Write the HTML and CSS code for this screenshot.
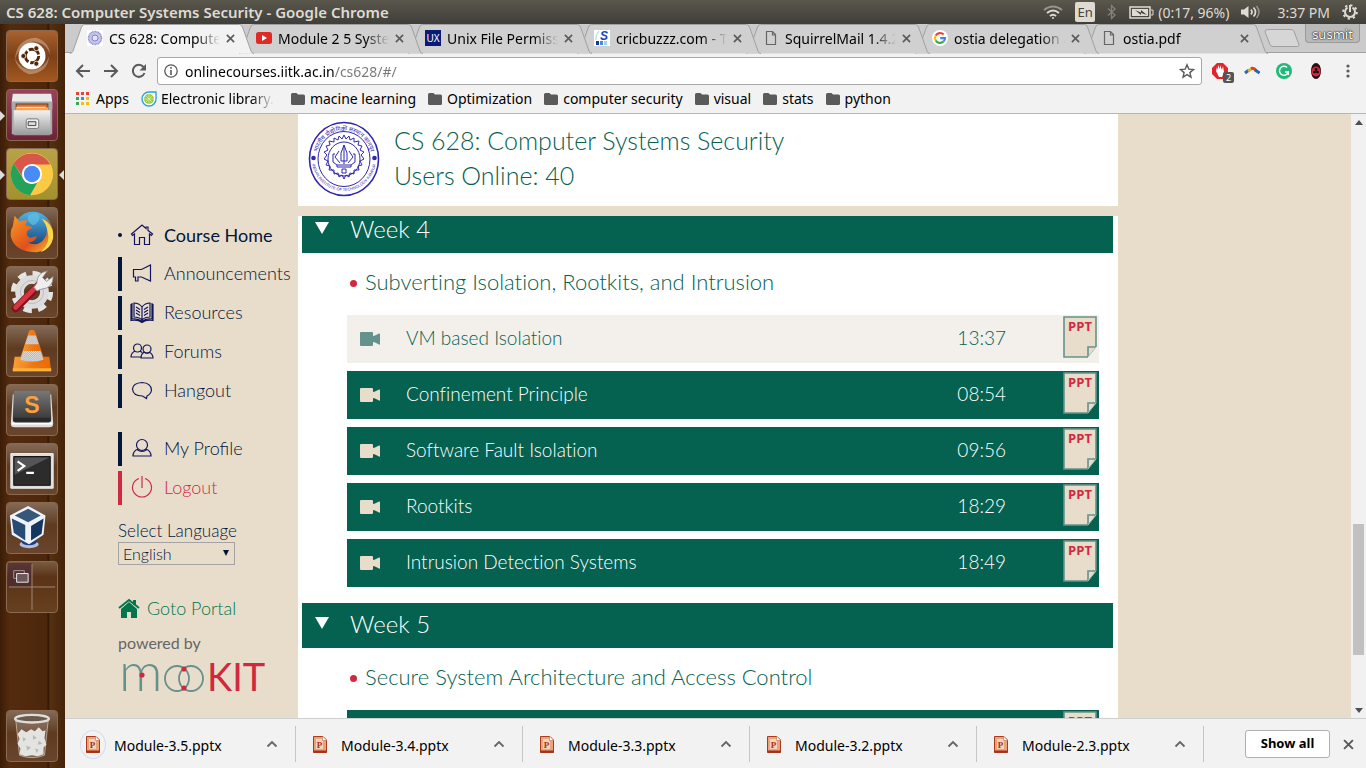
FILE: index.html
```html
<!DOCTYPE html>
<html lang="en">
<head>
<meta charset="utf-8">
<title>CS 628: Computer Systems Security</title>
<link rel="stylesheet" href="styles.css">
</head>
<body>
<svg class="defs" aria-hidden="true">
  <defs>
    <symbol id="tab" viewBox="0 0 184 30"><path d="M0 29.500C2 29 2.500 28 3 27L11.500 3Q12.500 .5 14.500 .5H169.500Q171.500 .5 172.500 3L181 27Q182 29.500 184 29.500"/></symbol>
    <symbol id="close" viewBox="0 0 10 10"><path d="M1 1l8 8M9 1l-8 8" fill="none" stroke="currentColor" stroke-width="1.800"/></symbol>
    <symbol id="folder" viewBox="0 0 14 12"><path d="M1.500 0h4L7 1.500h5.500A1.500 1.500 0 0 1 14 3v7.500a1.500 1.500 0 0 1-1.500 1.500h-11A1.500 1.500 0 0 1 0 10.500v-9A1.500 1.500 0 0 1 1.500 0z" fill="#5a5a5a"/></symbol>
    <symbol id="page" viewBox="0 0 16 16"><path d="M3.500 1.500h6l3 3v10h-9zM9.500 1.500v3.500h3" fill="none" stroke="#666" stroke-width="1.200"/></symbol>
    <symbol id="cam" viewBox="0 0 20 14"><path d="M1 0h11q1 0 1 1v3l2-.5 4-2q1-.4 1 .5v10q0 1-1 .5l-4-2-2-.5v3q0 1-1 1H1q-1 0-1-1V1q0-1 1-1z" fill="currentColor"/></symbol>
    <symbol id="ppt" viewBox="0 0 34 42"><path d="M1 1h32v30L25 41H1z" fill="#e8ddcb"/><path d="M33 31V1H1v40h24M25 41V31h8" fill="none" stroke="#65928a" stroke-width="1.600"/><path d="M33 31l-8 10" stroke="#a9bdb1" stroke-width="1"/><text x="17" y="15" text-anchor="middle" class="ppt-text">PPT</text></symbol>
    <symbol id="pfile" viewBox="0 0 14 17"><path d="M.5.5h9.500l3.500 3.500v12.500H.5z" fill="#e9a47c" stroke="#a83a1d"/><path d="M3 3h7v10H3z" fill="#f5d3bd"/><path d="M.5 15.500h13" stroke="#a3311b" stroke-width="2"/><path d="M9.500.5v4h4" fill="#fff" stroke="#c77a55" stroke-width=".7"/><text x="6.500" y="12" text-anchor="middle" class="p-text">P</text></symbol>
    <symbol id="caret" viewBox="0 0 12 8"><path d="M1.500 6.500L6 2l4.500 4.500" fill="none" stroke="#666" stroke-width="1.800"/></symbol>
    <linearGradient id="silver" x2="0" y2="1"><stop stop-color="#f3f3f3"/><stop offset="1" stop-color="#999"/></linearGradient>
    <linearGradient id="orange" x2="1"><stop stop-color="#f9a13a"/><stop offset=".5" stop-color="#ef7912"/><stop offset="1" stop-color="#e86a08"/></linearGradient>
    <linearGradient id="fox" x2="1" y2="1"><stop stop-color="#f69b28"/><stop offset=".6" stop-color="#e2501a"/><stop offset="1" stop-color="#f9c235"/></linearGradient>
    <linearGradient id="globe" x2="0" y2="1"><stop stop-color="#4fb5e6"/><stop offset="1" stop-color="#12366f"/></linearGradient>
    <linearGradient id="dark" x2="0" y2="1"><stop stop-color="#777"/><stop offset="1" stop-color="#333"/></linearGradient>
    <pattern id="mesh" width="2" height="2" patternUnits="userSpaceOnUse"><path d="M0 0h2v2H0z" fill="#e9e9e9"/><path d="M0 0h1v1H0zM1 1h1v1H1z" fill="#aaa"/></pattern>
  </defs>
</svg>

<header class="panel">
  <span class="panel-title">CS 628: Computer Systems Security - Google Chrome</span>
  <div class="indicators">
    <svg width="20" height="16" viewBox="0 0 20 16" fill="none" stroke-width="2"><path d="M1 6Q10-1 19 6" stroke="#96938a"/><path d="M4 9q6-5 12 0M7 12q3-2.500 6 0" stroke="#dfdbd2"/><circle cx="10" cy="14" r="1" fill="#dfdbd2"/></svg>
    <span class="lang">En</span>
    <svg class="bt" width="10" height="16" viewBox="0 0 10 16"><path d="M1 4.500l7 6.500-3.500 3.500v-13L8 5 1 11.500" fill="none" stroke="#85827a" stroke-width="1.300"/></svg>
    <span class="battery"><svg width="25" height="13" viewBox="0 0 25 13"><path d="M1 1h20v11H1z" fill="none" stroke="#dfdbd2" stroke-width="1.500"/><path d="M3 3h16v7H3z" fill="#dfdbd2"/><path d="M22 4h2v5h-2" fill="none" stroke="#dfdbd2"/><path d="M6 4l6 2.500V4l6 5-6-2v2z" fill="#45443e"/></svg>(0:17, 96%)</span>
    <svg class="sound" width="20" height="14" viewBox="0 0 20 14"><path d="M0 4.500h3L7.500 1v12L3 9.500H0z" fill="#dfdbd2"/><path d="M10 4.500q2 2.500 0 5M12.500 2.500q4 4.500 0 9" fill="none" stroke="#dfdbd2" stroke-width="1.700"/><path d="M15.500 1q5 6 0 12" fill="none" stroke="#96938a" stroke-width="1.500"/></svg>
    <span>3:37 PM</span>
    <svg class="gear" width="16" height="16" viewBox="0 0 16 16" fill="none" stroke="#dfdbd2"><circle cx="8" cy="8" r="6.800" stroke-width="2" stroke-dasharray="2.300 3.040"/><path d="M5.500 3.700a5 5 0 1 0 5 0" stroke-width="2"/><path d="M8 1v7" stroke-width="2"/></svg>
  </div>
</header>

<div class="desktop">
  <nav class="launcher" aria-label="Launcher">
    <button class="tile ubuntu" aria-label="Dash"><svg viewBox="0 0 52 52"><path d="M8 30Q10 8 30 7q14 4 15 18-4-13-18-14Q14 14 8 30zM44 26Q42 44 23 45 10 40 8 28q6 12 18 13 14-2 18-15z" fill="#fff" opacity=".3"/><circle cx="26" cy="26" r="14" fill="#fff"/><circle cx="26" cy="26" r="7" fill="none" stroke="#532609" stroke-width="3" stroke-dasharray="12.700 2"/><g fill="#532609" stroke="#fff" stroke-width=".8"><circle cx="17" cy="26" r="2.600"/><circle cx="30.500" cy="18" r="2.600"/><circle cx="30.500" cy="34" r="2.600"/></g></svg></button>
    <button class="tile files running" aria-label="Files"><svg viewBox="0 0 52 52"><path d="M6 4h40l1 8v8H5v-8z" fill="#e9e9e9"/><path d="M5 12h42v34H5z" fill="#a9a9a9"/><path d="M9 14h34v10H9z" fill="#444"/><path d="M10 15h32v3H10z" fill="#e96a20"/><path d="M9 18h34v4H9z" fill="#f8a457"/><path d="M10 18h30" stroke="#fff"/><path d="M7 21h38v26H7z" fill="url(#silver)"/><rect x="20" y="30" width="13" height="10" rx="2" fill="#eee" stroke="#777"/><path d="M22 33h8v4h-8z" fill="#ddd" stroke="#444"/></svg></button>
    <button class="tile chrome running active" aria-label="Chrome"><svg viewBox="0 0 52 52"><circle cx="26" cy="26" r="22" fill="#fbc943"/><path d="M7 15A22 22 0 0 1 45 16H26a10 10 0 0 0-9 14z" fill="#d9564b"/><path d="M7 15a22 22 0 0 0 17 33l8-14a10 10 0 0 1-15-3z" fill="#24a25c"/><circle cx="26" cy="26" r="10.500" fill="#fff"/><circle cx="26" cy="26" r="8.500" fill="#4a8af4"/></svg></button>
    <button class="tile" aria-label="Firefox"><svg viewBox="0 0 52 52"><circle cx="27" cy="24" r="20" fill="url(#globe)"/><path d="M22 8q9-5 12 1-1 7-7 9-7-4-5-10z" fill="#68c6e8" opacity=".6"/><path d="M6 19L8 8l5 6q5-2 8-1l-2 5 8 2-6 4q-2 5 3 7l7-2q-1 6-9 7 7 4 14-1 9-8 4-23 8 6 8 14 0 17-17 20Q8 46 4 30q-1-6 2-11z" fill="url(#fox)"/><path d="M36 11q13 6 12 20-2 11-13 15 11-10 7-22-1-7-6-13z" fill="#fbd64a"/></svg></button>
    <button class="tile" aria-label="Settings"><svg viewBox="0 0 52 52"><circle cx="26" cy="26" r="18" fill="none" stroke="#e4e4e4" stroke-width="8" stroke-dasharray="8 6.137"/><circle cx="26" cy="26" r="13" fill="none" stroke="#dcdcdc" stroke-width="9"/><circle cx="26" cy="26" r="12" fill="none" stroke="#bbb"/><path d="M9 43L34 18" stroke="#84101d" stroke-width="8" stroke-linecap="round"/><path d="M9 42L33 18" stroke="#d63643" stroke-width="5" stroke-linecap="round"/><path d="M31 17q0-11 11-13l-5 7 4 4 7-5q0 12-12 13l-5 2-3-4z" fill="#eee" stroke="#888" stroke-width=".8"/></svg></button>
    <button class="tile" aria-label="VLC"><svg viewBox="0 0 52 52"><path d="M8 32h36l2 15H6z" fill="url(#orange)"/><path d="M6 44h40v3H6z" fill="#ffb13d"/><path d="M26 4q3 0 4 4l9 28q-5 5-13 5t-13-5l9-28q1-4 4-4z" fill="url(#orange)"/><path d="M22 10h8l3 9H19z" fill="url(#mesh)"/><path d="M17 26h18l3 9q-12 4-24 0z" fill="url(#mesh)"/></svg></button>
    <button class="tile" aria-label="Sublime Text"><svg viewBox="0 0 52 52"><path d="M6 10h40l2 30q0 4-4 4H8q-4 0-4-4z" fill="#ddd"/><path d="M5 40h42" stroke="#fff" stroke-width="2"/><path d="M9 6h34q2 0 2 3l1 26q0 4-3 4H9q-3 0-3-4L7 9q0-3 2-3z" fill="url(#dark)"/><path d="M7 34h38v4H7z" fill="#282828"/><text x="26" y="29" text-anchor="middle" class="sub-s">S</text></svg></button>
    <button class="tile" aria-label="Terminal"><svg viewBox="0 0 52 52"><path d="M4 10h44v36H4z" fill="#ddd" stroke="#f5f5f5"/><path d="M7 13h38v30H7z" fill="#2c2c2c" stroke="#111"/><path d="M8 14h36L8 32z" fill="#555"/><path d="M11 18l7 5-7 5M20 30h8" fill="none" stroke="#fff" stroke-width="2.200"/></svg></button>
    <button class="tile" aria-label="VirtualBox"><svg viewBox="0 0 52 52"><ellipse cx="23" cy="43" rx="10" ry="4" fill="#b5c1dc"/><ellipse cx="23" cy="40" rx="8" ry="4" fill="#1f3d7c"/><path d="M22 3l18 10-2 20-15 10L5 33 3 13z" fill="#eef3fb"/><path d="M22 6l13 7-13 7-14-7z" fill="#355779"/><path d="M5 16l14 7v16L7 31z" fill="#264b74"/><path d="M38 16l-13 8v15l11-7z" fill="#15365f"/></svg></button>
    <button class="tile workspaces" aria-label="Workspaces"><svg viewBox="0 0 52 52"><path d="M1 1h25v25H1z" fill="#4b2a33" opacity=".7"/><path d="M26 2v48M2 26h48" stroke="#a4897a"/><path d="M7 9h11v8H7z" fill="none" stroke="#a79a9a"/><path d="M10 12h12v9H10z" fill="#6c5759" stroke="#eee"/></svg></button>
    <button class="tile trash" aria-label="Trash"><svg viewBox="0 0 52 52"><path d="M9 8l4 38q13 5 26 0l4-38" fill="#fff" fill-opacity=".15" stroke="#cbbdb0" stroke-width=".8"/><path d="M11 24l4-5 5 3 5-3 4 2 4-4 4 4 3-1-1 8 2 7-3 3v7l-6 2-6-1-7 1-6-2 1-6-3-5 2-5z" fill="#e3e4e1"/><path d="M16 27l4 2-3 3zM27 25l4 3-4 2zM33 31l4 3-5 1zM20 36l5 2-4 3zM29 39l4 1-2 4z" fill="#b9bab6"/><ellipse cx="26" cy="8" rx="17.500" ry="4" fill="#6c5a4b" stroke="#ddd" stroke-width="2.500"/></svg></button>
  </nav>

  <div class="browser">
    <div class="tabs">
      <div class="tab current"><svg class="shape"><use href="#tab"/></svg><svg class="fav" viewBox="0 0 16 16"><path d="M0 0h16v16H0z" fill="#fff"/><circle cx="8" cy="8" r="6.500" fill="#c4c4ed" stroke="#8d8dd6" stroke-width="1.500" stroke-dasharray="1 .5"/><circle cx="8" cy="8" r="3" fill="#e5e5fb" stroke="#8282d2"/></svg><span class="label">CS 628: Computer</span><button aria-label="Close tab"><svg><use href="#close"/></svg></button></div>
      <div class="tab"><svg class="shape"><use href="#tab"/></svg><svg class="fav" viewBox="0 0 16 16"><rect y="2" width="16" height="12" rx="2.500" fill="#df2b26"/><path d="M6 5l5 3-5 3z" fill="#fff"/></svg><span class="label">Module 2 5 System</span><button aria-label="Close tab"><svg><use href="#close"/></svg></button></div>
      <div class="tab"><svg class="shape"><use href="#tab"/></svg><svg class="fav" viewBox="0 0 16 16"><path d="M0 0h16v16H0z" fill="#0a1a78"/><text x="8" y="12" text-anchor="middle" class="ux">UX</text></svg><span class="label">Unix File Permiss</span><button aria-label="Close tab"><svg><use href="#close"/></svg></button></div>
      <div class="tab"><svg class="shape"><use href="#tab"/></svg><svg class="fav" viewBox="0 0 16 16"><path d="M0 0h16v16H0z" fill="#fff"/><path d="M5 1Q1 5 2 10" fill="none" stroke="#9cd3ef"/><text x="10" y="10" text-anchor="middle" class="cric">S</text><path d="M2 11h3v4H2z" fill="#163a9c"/><path d="M6 11h3v4H6z" fill="#4a8ad6"/><path d="M10 11h3v4h-3z" fill="#9cd3ef"/></svg><span class="label">cricbuzzz.com - T</span><button aria-label="Close tab"><svg><use href="#close"/></svg></button></div>
      <div class="tab"><svg class="shape"><use href="#tab"/></svg><svg class="fav"><use href="#page"/></svg><span class="label">SquirrelMail 1.4.2</span><button aria-label="Close tab"><svg><use href="#close"/></svg></button></div>
      <div class="tab"><svg class="shape"><use href="#tab"/></svg><svg class="fav" viewBox="0 0 16 16"><circle cx="8" cy="8" r="8" fill="#fff"/><g fill="none" stroke-width="2.200"><path d="M11.600 4.500A5 5 0 0 0 3.700 5.500" stroke="#ea4335"/><path d="M3.700 5.500a5 5 0 0 0 0 5" stroke="#fbbc05"/><path d="M3.700 10.500a5 5 0 0 0 7.800 1" stroke="#34a853"/><path d="M11.500 11.500A5 5 0 0 0 13 8.200H8.200" stroke="#4285f4"/></g></svg><span class="label">ostia delegation a</span><button aria-label="Close tab"><svg><use href="#close"/></svg></button></div>
      <div class="tab"><svg class="shape"><use href="#tab"/></svg><svg class="fav"><use href="#page"/></svg><span class="label">ostia.pdf</span><button aria-label="Close tab"><svg><use href="#close"/></svg></button></div>
      <button class="new-tab" aria-label="New tab"><svg viewBox="0 0 36 18"><path d="M4 .5h23q2 0 3 2l5 13q.5 2-1.500 2H9q-2 0-3-2L1 3Q.5.500 4 .5z" fill="#d6d6d6" stroke="#a0a0a0"/></svg></button>
      <button class="user">susmit</button>
    </div>

    <div class="toolbar">
      <button aria-label="Back"><svg viewBox="0 0 16 16"><path d="M15 8H2M8 2L2 8l6 6" class="line"/></svg></button>
      <button aria-label="Forward"><svg viewBox="0 0 16 16"><path d="M1 8h13M8 2l6 6-6 6" class="line"/></svg></button>
      <button aria-label="Reload"><svg viewBox="0 0 16 16"><path d="M13.500 10A6 6 0 1 1 12.500 4" class="line"/><path d="M15 1v6.500H8.500z" fill="#5a5a5a"/></svg></button>
      <div class="omnibox">
        <svg class="info" viewBox="0 0 14 14"><circle cx="7" cy="7" r="6.200" fill="none" stroke="#5a5a5a" stroke-width="1.300"/><path d="M7 3v1.700M7 6v5" stroke="#5a5a5a" stroke-width="1.600"/></svg>
        <input aria-label="Address" value="onlinecourses.iitk.ac.in/cs628/#/">
        <svg class="star" viewBox="0 0 16 16"><path d="M8 1.800l1.800 4.300 4.700.4-3.600 3.100 1.100 4.600L8 11.700l-4 2.500 1.100-4.600L1.500 6.500l4.700-.4z" fill="none" stroke="#5a5a5a" stroke-width="1.400"/></svg>
      </div>
      <div class="extensions">
        <button class="ext" aria-label="AdBlock"><svg viewBox="0 0 16 16"><path d="M5 0h6l5 5v6l-5 5H5l-5-5V5z" fill="#e3242b"/><path d="M4 8l1-4 1 3V2l2 4V2l2 5 1-4 1 6-2 5H7z" fill="#fff"/></svg><span class="badge">2</span></button>
        <button class="ext" aria-label="Rainbow"><svg viewBox="0 0 16 16"><path d="M1 10l4-3" stroke="#2a66b7" stroke-width="3"/><path d="M4 8l4-2.500" stroke="#e5b22b" stroke-width="3"/><path d="M7 5.500q3-1 5 2" stroke="#d9402f" stroke-width="3" fill="none"/><path d="M11 7l4.500 3" stroke="#2a66b7" stroke-width="3"/></svg></button>
        <button class="ext" aria-label="Grammarly"><svg viewBox="0 0 16 16"><circle cx="8" cy="8" r="8" fill="#1fb978"/><path d="M11 4.500A4.500 4.500 0 1 0 12.300 9H9M12.300 8v4" fill="none" stroke="#fff" stroke-width="1.500"/></svg></button>
        <button class="ext" aria-label="Bug"><svg viewBox="0 0 16 16"><ellipse cx="8" cy="8" rx="5" ry="8" fill="#2a0e12"/><ellipse cx="8" cy="8.500" rx="4.500" ry="5" fill="#d4293f"/><circle cx="8" cy="6.500" r="1.400"/><circle cx="6.500" cy="9" r="1.300"/><circle cx="9.500" cy="9" r="1.300"/></svg></button>
        <button class="ext" aria-label="Menu"><svg viewBox="0 0 16 16" fill="#5a5a5a"><circle cx="8" cy="3" r="1.600"/><circle cx="8" cy="8" r="1.600"/><circle cx="8" cy="13" r="1.600"/></svg></button>
      </div>
    </div>

    <div class="bookmarks">
      <a class="apps" href="#"><svg width="13" height="13" viewBox="0 0 13 13"><path d="M0 0h3v3H0zM5 0h3v3H5zM10 0h3v3h-3z" fill="#ea4335"/><path d="M0 5h3v3H0z" fill="#34a853"/><path d="M5 5h3v3H5z" fill="#4285f4"/><path d="M10 5h3v3h-3zM10 10h3v3h-3zM5 10h3v3H5z" fill="#fbbc05"/><path d="M0 10h3v3H0z" fill="#34a853"/></svg>Apps</a>
      <a class="elib" href="#"><svg width="16" height="16" viewBox="0 0 16 16"><path d="M8 1h7v7a7 7 0 1 1-7-7z" fill="#fff" stroke="#29a3e0" stroke-width="1.400"/><circle cx="8" cy="8" r="5" fill="#9aca3c"/><path d="M8 3v10M3 8h10M4.500 4.500l7 7M11.500 4.500l-7 7" stroke="#d8ecab" stroke-width=".8"/></svg><span>Electronic library.</span></a>
      <a href="#"><svg width="14" height="12"><use href="#folder"/></svg>macine learning</a>
      <a href="#"><svg width="14" height="12"><use href="#folder"/></svg>Optimization</a>
      <a href="#"><svg width="14" height="12"><use href="#folder"/></svg>computer security</a>
      <a href="#"><svg width="14" height="12"><use href="#folder"/></svg>visual</a>
      <a href="#"><svg width="14" height="12"><use href="#folder"/></svg>stats</a>
      <a href="#"><svg width="14" height="12"><use href="#folder"/></svg>python</a>
    </div>

    <div class="viewport">
      <aside class="side">
        <nav class="menu" aria-label="Course">
          <a class="here" href="#"><svg viewBox="0 0 24 24"><path d="M1.500 11L12 2l4 3.500V4h2v3.500l4.500 3.500-1 1.500-2-1.500v10.500h-5v-7h-5v7h-5V11l-2 1.500z"/></svg>Course Home</a>
          <a href="#"><svg viewBox="0 0 24 24"><path d="M3.500 8.500h8L20.500 4v16l-9-4H8v4H5.500v-4h-2zM20.500 4v16"/></svg>Announcements</a>
          <a href="#"><svg viewBox="0 0 24 24"><path d="M2 3v16q6-1 10 2.500Q16 18 22 19V3M1 4v16.500q7-1 11 2 4-3 11-2V4M4 3q5 0 8 4 3-4 8-4v14q-5 0-8 3-3-3-8-3zM12 7v13M6 7l4 2.500M6 10l4 2.500M6 13l4 2.500M18 7l-4 2.500M18 10l-4 2.500M18 13l-4 2.500"/></svg>Resources</a>
          <a href="#"><svg viewBox="0 0 24 24"><circle cx="7.500" cy="9" r="4"/><circle cx="17" cy="10" r="4"/><path d="M5 12Q1 14 1 18h10M10 12l2 1.500M14 13q-3 2-3 6h12q0-4-4-6M14 13q3 2.500 6 0"/></svg>Forums</a>
          <a href="#"><svg viewBox="0 0 24 24"><path d="M17 18q4-2 4.500-6Q21 5 12 4.500 3 5 2.500 11q.5 7 10 7l4 2.500z"/></svg>Hangout</a>
          <a class="apart" href="#"><svg viewBox="0 0 24 24"><circle cx="12" cy="9" r="5.500"/><path d="M8 13q-5 2-5 7h18q0-5-5-7M7 13.500q5 4 10 0"/></svg>My Profile</a>
          <a class="logout" href="#"><svg viewBox="0 0 24 24"><path d="M9 3.500a9.500 9.500 0 1 0 6 0M12 1v12"/></svg>Logout</a>
        </nav>
        <label for="language">Select Language</label>
        <div class="select"><select id="language"><option>English</option></select></div>
        <a class="portal" href="#"><svg width="22" height="20" viewBox="0 0 22 20"><path d="M1 10L11 2l10 8" fill="none" stroke="#00774a" stroke-width="2"/><path d="M3 11l8-7 8 7v9h-6v-6H9v6H3zM15 2h3v5h-3z" fill="#00774a"/></svg>Goto Portal</a>
        <span class="powered">powered by</span>
        <svg class="mookit" viewBox="0 0 148 32" role="img" aria-label="mooKIT"><text x="1" y="29" class="mook-m">m</text><g fill="none" stroke="#65928a" stroke-width="1.800"><ellipse cx="59" cy="16.500" rx="12" ry="12.500"/><ellipse cx="73" cy="16.500" rx="12" ry="12.500"/></g><g fill="#d0293f"><circle cx="24" cy="13" r="2.600"/><circle cx="66" cy="7" r="2.600"/><circle cx="66" cy="26" r="2.600"/></g><text x="89" y="29" class="mook-kit">KIT</text></svg>
      </aside>

      <main class="course">
        <header class="course-head">
          <svg class="seal" viewBox="0 0 72 76"><g fill="none" stroke="#3127ad"><ellipse cx="36" cy="38" rx="34.500" ry="36.500" stroke-width="1.600"/><ellipse cx="36" cy="38" rx="26" ry="27.500"/><path d="M36 14l2 4 3-3 1 4 4-2 0 4 5-1-1 4 4 1-2 4 4 2-3 3 3 4-4 2 2 4-4 1 1 4-5 0 0 4-4-1-1 4-3-2-2 4-2-4-3 2-1-4-4 1 0-4-5 0 1-4-4-1 2-4-4-2 3-4-3-3 4-2-2-4 4-1-1-4 5 1 0-4 4 2 1-4 3 3z"/><ellipse cx="36" cy="38" rx="16" ry="17"/><path d="M36 24l-3 8v8h6v-8zM36 24v19M31 30l-4 6 5 6M41 30l4 6-5 6M27 33h-2v8l4 3h14l4-3v-8h-2M29 44v2h14v-2M34 48h4v4h-4z"/></g><g fill="#3127ad"><circle cx="5.500" cy="37" r="2.300"/><circle cx="66.500" cy="37" r="2.300"/></g><path id="arc-top" d="M9 33A27.500 29 0 0 1 63 33" fill="none"/><path id="arc-bottom" d="M4 42A32.500 34 0 0 0 68 42" fill="none"/><text class="seal-hi"><textPath href="#arc-top" startOffset="50%" text-anchor="middle">भारतीय प्रौद्योगिकी संस्थान कानपुर</textPath></text><text class="seal-en"><textPath href="#arc-bottom" startOffset="50%" text-anchor="middle">INDIAN INSTITUTE OF TECHNOLOGY KANPUR</textPath></text></svg>
          <h1>CS 628: Computer Systems Security<br>Users Online: 40</h1>
        </header>
        <div class="weeks">
          <section>
            <h2>Week 4</h2>
            <h3>Subverting Isolation, Rootkits, and Intrusion</h3>
            <ul class="lectures">
              <li class="seen"><svg class="cam"><use href="#cam"/></svg><a href="#">VM based Isolation</a><time>13:37</time><svg class="ppt"><use href="#ppt"/></svg></li>
              <li><svg class="cam"><use href="#cam"/></svg><a href="#">Confinement Principle</a><time>08:54</time><svg class="ppt"><use href="#ppt"/></svg></li>
              <li><svg class="cam"><use href="#cam"/></svg><a href="#">Software Fault Isolation</a><time>09:56</time><svg class="ppt"><use href="#ppt"/></svg></li>
              <li><svg class="cam"><use href="#cam"/></svg><a href="#">Rootkits</a><time>18:29</time><svg class="ppt"><use href="#ppt"/></svg></li>
              <li><svg class="cam"><use href="#cam"/></svg><a href="#">Intrusion Detection Systems</a><time>18:49</time><svg class="ppt"><use href="#ppt"/></svg></li>
            </ul>
          </section>
          <section>
            <h2>Week 5</h2>
            <h3>Secure System Architecture and Access Control</h3>
            <ul class="lectures">
              <li><span></span><span></span><span></span><svg class="ppt"><use href="#ppt"/></svg></li>
            </ul>
          </section>
        </div>
      </main>

      <div class="scrollbar"><i class="up"></i><i class="track"></i><i class="thumb"></i><i class="track-end"></i><i class="down"></i></div>
    </div>

    <footer class="downloads">
      <div class="file first"><svg class="pfile"><use href="#pfile"/></svg><span>Module-3.5.pptx</span><button aria-label="Options"><svg><use href="#caret"/></svg></button></div>
      <div class="file"><svg class="pfile"><use href="#pfile"/></svg><span>Module-3.4.pptx</span><button aria-label="Options"><svg><use href="#caret"/></svg></button></div>
      <div class="file"><svg class="pfile"><use href="#pfile"/></svg><span>Module-3.3.pptx</span><button aria-label="Options"><svg><use href="#caret"/></svg></button></div>
      <div class="file"><svg class="pfile"><use href="#pfile"/></svg><span>Module-3.2.pptx</span><button aria-label="Options"><svg><use href="#caret"/></svg></button></div>
      <div class="file"><svg class="pfile"><use href="#pfile"/></svg><span>Module-2.3.pptx</span><button aria-label="Options"><svg><use href="#caret"/></svg></button></div>
      <button class="show-all">Show all</button>
      <button class="dismiss" aria-label="Close"><svg><use href="#close"/></svg></button>
    </footer>
  </div>
</div>
</body>
</html>
```
FILE: styles.css
```css
* { box-sizing: border-box; }
body {
  margin: 0;
  height: 100vh;
  display: flex;
  flex-direction: column;
  overflow: hidden;
  font: 14px "Noto Sans", "Open Sans", sans-serif;
  color: #000;
}
a { color: inherit; text-decoration: none; }
button { border: 0; padding: 0; background: none; font: inherit; color: inherit; }
svg { display: block; flex: none; }
.defs { position: absolute; width: 0; height: 0; }

/* top panel */
.panel {
  flex: none;
  height: 24px;
  padding: 0 8px 0 6px;
  display: flex;
  align-items: center;
  justify-content: space-between;
  background: linear-gradient(#5a574c, #3f3e39);
  color: #dfdbd2;
}
.panel-title { font-size: 15px; font-weight: 600; line-height: 22px; }
.indicators { display: flex; align-items: center; gap: 12px; }
.lang { width: 20px; height: 20px; border-radius: 2px; background: #dfdbd2; color: #45443e; font-size: 13px; line-height: 20px; text-align: center; }
.battery { display: flex; align-items: center; gap: 4px; }
.sound { margin-right: 4px; }

/* launcher */
.desktop { flex: 1; min-height: 0; display: flex; }
.launcher {
  flex: none;
  width: 65px;
  padding: 6px 7px 6px 6px;
  display: flex;
  flex-direction: column;
  gap: 7px;
  background: linear-gradient(90deg, #3a1d08, #542b0e 15%, #4c270c 72%, #2d1606 74%, #55300f 77%, #44230b);
}
.tile {
  position: relative;
  flex: none;
  width: 52px;
  height: 52px;
  border: 1px solid #8a6a50;
  border-radius: 4px;
  background: linear-gradient(#836a57, #5e3b20 45%, #68452c);
}
.tile svg { width: 50px; height: 50px; }
.ubuntu { background: linear-gradient(#a9622f, #7c4018 50%, #a2581f); }
.files { background: linear-gradient(#97435b, #6d2238); }
.chrome { background: linear-gradient(#b8a248, #a3912f); }
.workspaces { background: linear-gradient(#7a5a42, #5a3316 30%, #66401f); }
.trash { margin-top: auto; }
.running::before { content: ""; position: absolute; left: -7px; top: 21px; border: 5px solid transparent; border-left-color: #ddd; border-right: 0; }
.active::after { content: ""; position: absolute; right: -7px; top: 21px; border: 5px solid transparent; border-right-color: #ddd; border-left: 0; }
.sub-s { font: 700 24px "Liberation Sans", sans-serif; fill: #f9a13a; }

/* browser chrome */
.browser { flex: 1; min-width: 0; display: flex; flex-direction: column; background: #f2f2f2; }
.tabs {
  position: relative;
  flex: none;
  height: 29px;
  padding-left: 22px;
  display: flex;
  background: #cbcbcb;
  border-bottom: 1px solid #a0a0a0;
}
.tab { position: relative; flex: 0 0 169px; display: flex; align-items: center; gap: 6px; }
.tab .shape { position: absolute; left: -17px; top: 0; width: 184px; height: 30px; fill: #d0d0d0; stroke: #a0a0a0; }
.tab.current { z-index: 7; }
.tab.current .shape { fill: #f2f2f2; }
.tab:nth-child(2) { z-index: 6; }
.tab:nth-child(3) { z-index: 5; }
.tab:nth-child(4) { z-index: 4; }
.tab:nth-child(5) { z-index: 3; }
.tab:nth-child(6) { z-index: 2; }
.tab:nth-child(7) { z-index: 1; }
.fav { position: relative; width: 16px; height: 16px; }
.label {
  position: relative;
  width: 111px;
  overflow: hidden;
  white-space: nowrap;
  -webkit-mask-image: linear-gradient(90deg, #000 78%, transparent);
  mask-image: linear-gradient(90deg, #000 78%, transparent);
}
.tab button { position: relative; color: #5a5a5a; }
.tab button svg { width: 9px; height: 9px; }
.ux { font: 10px "Noto Sans", sans-serif; fill: #fff; }
.cric { font: 700 italic 12px "Liberation Sans", sans-serif; fill: #1745c0; }
.new-tab { flex: none; align-self: center; margin-left: -6px; }
.new-tab svg { width: 36px; height: 18px; }
.user {
  flex: none;
  align-self: flex-start;
  width: 55px;
  height: 19px;
  margin: 0 6px 0 auto;
  padding-top: 2px;
  border: 1px solid #999;
  border-top: 0;
  border-radius: 0 0 4px 4px;
  background: #b9b9b9;
  color: #fff;
  font-size: 13px;
  line-height: 16px;
  text-shadow: 0 0 2px #000, 0 0 1px #000;
}
.toolbar { flex: none; height: 36px; padding: 0 10px; display: flex; align-items: center; gap: 12px; }
.toolbar button svg, .star { width: 16px; height: 16px; }
.line { fill: none; stroke: #5a5a5a; stroke-width: 2; }
.omnibox {
  flex: 1;
  height: 28px;
  margin: 0 -2px;
  padding: 0 6px;
  display: flex;
  align-items: center;
  gap: 7px;
  border: 1px solid #a8a8a8;
  border-radius: 3px;
  background: #fff;
}
.info { width: 14px; height: 14px; }
.omnibox input {
  flex: 1;
  border: 0;
  padding: 0;
  outline: 0;
  font: inherit;
  color: transparent;
  background: linear-gradient(90deg, #000 150px, #777 150px);
  -webkit-background-clip: text;
  background-clip: text;
}
.extensions { display: flex; gap: 16px; }
.ext { position: relative; }
.badge { position: absolute; left: 11px; top: 9px; width: 11px; height: 11px; border-radius: 2px; background: #555; color: #fff; font-size: 9px; line-height: 11px; }
.bookmarks {
  flex: none;
  height: 25px;
  padding: 0 11px 5px;
  display: flex;
  align-items: center;
  gap: 12px;
  border-bottom: 1px solid #b6b6b6;
  white-space: nowrap;
}
.bookmarks a { display: flex; align-items: center; gap: 5px; }
.bookmarks .apps { gap: 7px; }
.bookmarks .elib { gap: 4px; width: 138px; }
.elib span { -webkit-mask-image: linear-gradient(90deg, #000 80%, transparent); mask-image: linear-gradient(90deg, #000 80%, transparent); }

/* page */
.viewport {
  flex: 1;
  min-height: 0;
  display: flex;
  overflow: hidden;
  background: #e8ddcb;
  font-family: Lato, sans-serif;
  font-weight: 300;
}
.side { flex: 0 0 233px; padding: 104px 0 0 53px; color: #02153a; font-size: 18px; }
.menu { display: flex; flex-direction: column; gap: 5px; margin-bottom: 14px; }
.menu a {
  height: 34px;
  padding: 0 0 2px 8px;
  display: flex;
  align-items: center;
  gap: 10px;
  border-left: 4px solid #02153a;
}
.menu svg { width: 24px; height: 24px; fill: none; stroke: #10165c; stroke-width: 1.2; }
.menu .here { position: relative; padding-bottom: 0; border-color: transparent; font-weight: 400; }
.here::before { content: ""; position: absolute; left: -4px; top: 15px; width: 4px; height: 4px; border-radius: 50%; background: #02153a; }
.menu .apart { margin-top: 19px; }
.menu .logout { color: #cf2a43; border-color: #cf2a43; }
.menu .logout svg { stroke: #cf2a43; }
.side label { display: block; font-size: 17px; line-height: 23px; }
.select { position: relative; width: 117px; }
.select select {
  display: block;
  width: 100%;
  height: 23px;
  padding: 0 4px;
  appearance: none;
  border: 1px solid #a3a3a3;
  border-radius: 0;
  background: none;
  font: 300 16px Lato, sans-serif;
  color: inherit;
}
.select::after { content: ""; position: absolute; right: 6px; top: 8px; border: 3px solid transparent; border-top: 6px solid #02153a; border-bottom: 0; }
.portal { display: flex; align-items: center; gap: 7px; margin-top: 32px; line-height: 22px; color: #00774a; }
.powered { display: block; margin: 14px 0 9px; font-size: 16px; line-height: 20px; font-weight: 400; color: #666; }
.mookit { width: 148px; height: 32px; }
.mook-m { font: 300 54px Lato, sans-serif; fill: #65928a; }
.mook-kit { font: 400 38px Lato, sans-serif; fill: #d0293f; }

.course { flex: 0 1 820px; min-width: 0; color: #056150; font-variant-ligatures: none; }
.course-head { height: 92px; padding: 7px 10px; display: flex; gap: 14px; background: #fff; margin-bottom: 10px; }
.seal { width: 72px; height: 76px; }
.seal-hi { font: 6px "Noto Sans", sans-serif; fill: #3127ad; }
.seal-en { font: 4px "Liberation Sans", sans-serif; fill: #3127ad; }
h1, h2, h3 { margin: 0; font-weight: 300; }
h1 { font-size: 25px; line-height: 35px; padding-top: 2px; }
.weeks { height: 100%; padding: 0 5px 0 4px; background: #fff; overflow: hidden; }
.weeks section:first-child { margin-top: -8px; }
h2 {
  height: 45px;
  padding: 0 0 4px 13px;
  display: flex;
  align-items: center;
  gap: 21px;
  background: #056150;
  color: #fff;
  font-size: 24px;
}
h2::before { content: ""; border: 7px solid transparent; border-top: 12px solid #fff; border-bottom: 0; margin-top: -2px; }
h3 { height: 62px; padding: 0 0 6px 48px; display: flex; align-items: center; gap: 8px; font-size: 22px; }
h3::before { content: ""; width: 7px; height: 7px; margin-top: 4px; border-radius: 50%; background: #d0293f; }
.lectures { margin: 0; padding: 0 14px 16px 45px; list-style: none; display: grid; gap: 8px; }
.lectures li {
  height: 48px;
  padding: 0 2px 0 13px;
  display: grid;
  grid-template-columns: 46px 1fr 60px 91px;
  align-items: center;
  background: #056150;
  color: #fff;
  font-size: 19px;
}
.lectures a, .lectures time { padding-bottom: 3px; }
.lectures time { text-align: right; }
.lectures .seen { background: #f3f0eb; color: #056150; }
.cam { width: 20px; height: 14px; color: #e8ddcb; }
.seen .cam { color: #65928a; }
.ppt { width: 34px; height: 42px; align-self: start; justify-self: end; margin-top: 1px; }
.ppt-text { font: 700 13px "Open Sans", sans-serif; fill: #d0293f; }

.scrollbar { width: 15px; margin-left: auto; display: flex; flex-direction: column; align-items: center; background: #f1f1f1; }
.up { margin-top: 6px; border: 4px solid transparent; border-top: 0; border-bottom: 5px solid #505050; }
.down { margin-bottom: 5px; border: 4px solid transparent; border-bottom: 0; border-top: 5px solid #505050; }
.track { flex: 399; }
.thumb { flex: 131; width: 11px; background: #c1c1c1; }
.track-end { flex: 53; }

/* download shelf */
.downloads { flex: none; height: 50px; padding: 7px 12px 6px 4px; display: flex; align-items: center; border-top: 1px solid #cfcfcf; background: #f2f2f2; }
.file { flex: 0 1 227px; height: 36px; padding: 0 17px 0 17px; display: flex; align-items: center; border-right: 1px solid #c6c6c6; }
.file span { margin-left: 14px; padding-top: 2px; }
.file button { margin-left: auto; }
.file button svg { width: 12px; height: 8px; }
.pfile { width: 14px; height: 17px; }
.first .pfile { border-radius: 50%; outline: 1px solid #d3ddf0; outline-offset: 5px; overflow: visible; }
.p-text { font: 700 9px "Liberation Serif", serif; fill: #a3311b; }
.show-all { width: 85px; height: 28px; margin-left: auto; padding-bottom: 2px; border: 1px solid #b0b0b0; border-radius: 3px; background: #fff; font-size: 13px; font-weight: 700; }
.dismiss { margin-left: 13px; color: #5a5a5a; }
.dismiss svg { width: 11px; height: 11px; }
```
